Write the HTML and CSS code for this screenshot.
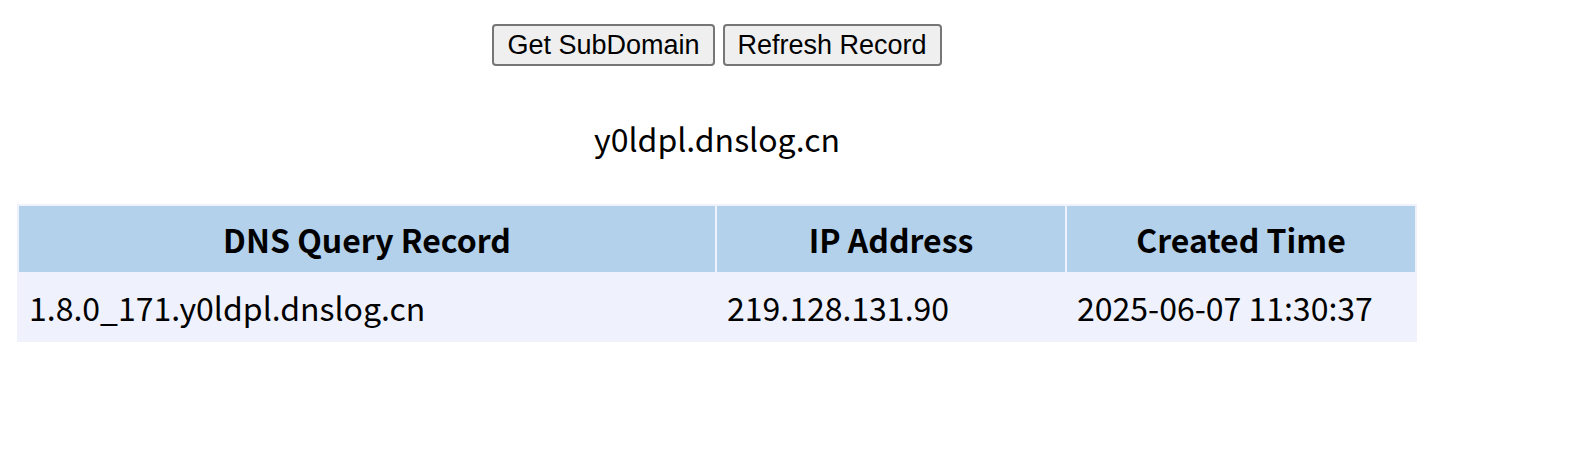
FILE: index.html
```html
<!DOCTYPE html>
<html>
<head>
<meta charset="utf-8">
<link rel="stylesheet" href="styles.css">
</head>
<body>
<div class="page">
  <div class="actions">
    <button class="btn">Get SubDomain</button>
    <button class="btn">Refresh Record</button>
  </div>
  <div class="domain">y0ldpl.dnslog.cn</div>
  <table class="records">
    <thead>
      <tr>
        <th class="col-wide">DNS Query Record</th>
        <th class="col">IP Address</th>
        <th class="col">Created Time</th>
      </tr>
    </thead>
    <tbody>
      <tr>
        <td>1.8.0_171.y0ldpl.dnslog.cn</td>
        <td>219.128.131.90</td>
        <td>2025-06-07 11:30:37</td>
      </tr>
    </tbody>
  </table>
</div>
</body>
</html>
```
FILE: styles.css
```css
html, body {
  margin: 0;
  padding: 0;
  background: #ffffff;
}
.page {
  width: 1400px;
  margin-left: 17px;
  padding-top: 24px;
  font-family: "Noto Sans CJK SC", "Source Sans Pro", sans-serif;
  color: #000;
}
.actions {
  display: flex;
  justify-content: center;
  gap: 8px;
}
.btn {
  font-family: "Liberation Sans", Arial, sans-serif;
  font-size: 27px;
  line-height: 30px;
  height: 42px;
  padding: 4px 13px;
  color: #000;
  background: #efefef;
  border: 2px solid #767676;
  border-radius: 4px;
}
.domain {
  text-align: center;
  font-size: 32px;
  line-height: 40px;
  margin-top: 52px;
  margin-bottom: 46px;
}
.records {
  width: 1400px;
  border-collapse: separate;
  border-spacing: 2px;
  background: #eff2fc;
  font-size: 32px;
  table-layout: fixed;
}
.records th {
  background: #b3d1eb;
  height: 66px;
  padding: 0 10px;
  font-weight: 700;
  text-align: center;
  box-sizing: border-box;
}
.records td {
  height: 66px;
  padding: 0 10px;
  text-align: left;
  box-sizing: border-box;
}
.col-wide { width: 696px; }
.col { width: 348px; }
```
